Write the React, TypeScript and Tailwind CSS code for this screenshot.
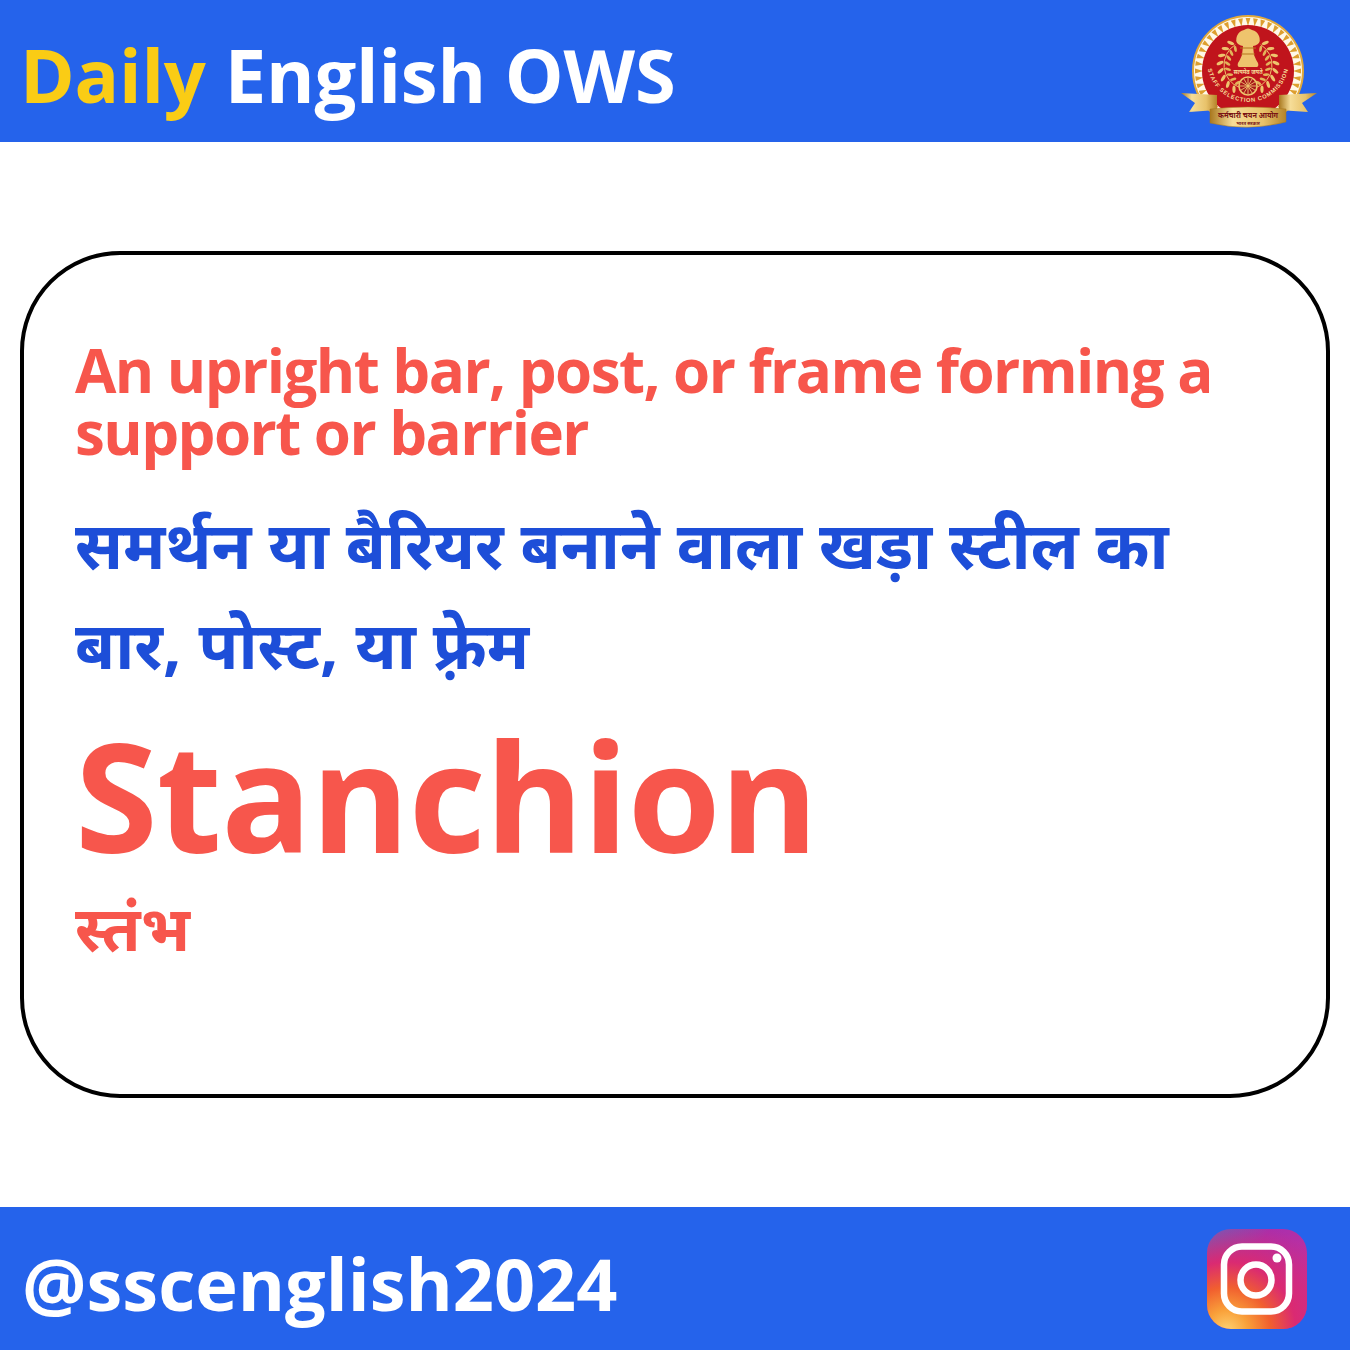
const font = { fontFamily: '"Open Sans", "Noto Sans", "Noto Sans Devanagari", sans-serif' };

const polar = (r: number, deg: number, cx = 67, cy = 54) => ({
  x: cx + r * Math.cos((deg * Math.PI) / 180),
  y: cy + r * Math.sin((deg * Math.PI) / 180),
});

// one laurel branch, mirrored for the right side
const Laurel = ({ side }: { side: 1 | -1 }) => {
  const steps = Array.from({ length: 8 }, (_, i) => 232 - i * 16);
  const from = polar(24, 238);
  const to = polar(24, 110);
  return (
    <g transform={side === -1 ? 'translate(134 0) scale(-1 1)' : undefined}>
      <path d={`M${from.x} ${from.y} A24 24 0 0 0 ${to.x} ${to.y}`} fill="none" stroke="#eec46d" strokeWidth="1" />
      {steps.map((a) => {
        const o = polar(28, a);
        const n = polar(20.5, a);
        return (
          <g key={a}>
            <ellipse cx={o.x} cy={o.y} rx="1.6" ry="3.7" fill="#eec46d" transform={`rotate(${a + 60} ${o.x} ${o.y})`} />
            <ellipse cx={n.x} cy={n.y} rx="1.4" ry="3.2" fill="#e3b45a" transform={`rotate(${a + 120} ${n.x} ${n.y})`} />
          </g>
        );
      })}
    </g>
  );
};

const SscLogo = () => {
  const teeth = Array.from({ length: 44 }, (_, i) => i * (360 / 44));
  const spokes = Array.from({ length: 12 }, (_, i) => i * 30);
  return (
    <svg width="136" height="118" viewBox="0 0 136 118" className="block">
      <defs>
        <linearGradient id="gold" x1="0" y1="0" x2="1" y2="0">
          <stop offset="0" stopColor="#a9781f" />
          <stop offset="0.3" stopColor="#f6dd98" />
          <stop offset="0.7" stopColor="#e8c26a" />
          <stop offset="1" stopColor="#b5842a" />
        </linearGradient>
        <path id="sscArc" d="M 26 50 A 41 41 0 0 0 108 50" fill="none" />
      </defs>
      <circle cx="67" cy="60" r="56" fill="#e2a93b" />
      <circle cx="67" cy="60" r="54" fill="#fff8e8" />
      {teeth.map((a) => (
        <polygon key={a} points="64.6,7 69.4,7 67,15" fill="#dd9f2f" transform={`rotate(${a} 67 60)`} />
      ))}
      <circle cx="67" cy="60" r="46" fill="#c0141c" />
      <Laurel side={1} />
      <Laurel side={-1} />
      <path
        d="M63 19 q4 -3 8 0 q5 1 7 6 q2 5 -1 8 q-3 2 -5 2 l1 9 q2 5 4 8 q1 3 -1 4 h-18 q-2 -1 -1 -4 q2 -3 4 -8 l1 -9 q-2 0 -5 -2 q-3 -3 -1 -8 q2 -5 7 -6 z"
        fill="#eec46d"
      />
      <path d="M59 37 h16 M60 43 h14" stroke="#b5741e" strokeWidth="1" />
      <text x="67" y="63" textAnchor="middle" fontSize="5.6" fill="#f6dd98" fontWeight="700">सत्यमेव जयते</text>
      <circle cx="67" cy="75" r="9" fill="#a8161a" stroke="#eec46d" strokeWidth="1.6" />
      {spokes.map((a) => {
        const p = polar(8, a, 67, 75);
        return <line key={a} x1="67" y1="75" x2={p.x} y2={p.y} stroke="#eec46d" strokeWidth="0.9" />;
      })}
      <text fontSize="5.8" fontWeight="700" fill="#f6dd98" letterSpacing="0.75" style={{ fontFamily: '"Liberation Sans", sans-serif' }}>
        <textPath href="#sscArc" startOffset="50%" textAnchor="middle">STAFF SELECTION COMMISSION</textPath>
      </text>
      <path d="M0 82 L36 84 L36 99 L8 101 L14 92 Z" fill="url(#gold)" />
      <path d="M136 82 L98 84 L98 99 L127 101 L121 92 Z" fill="url(#gold)" />
      <path d="M29 98 Q67 94 105 98 L105 111 Q67 121 29 112 Z" fill="url(#gold)" stroke="#a9781f" strokeWidth="0.5" />
      <text x="67" y="107" textAnchor="middle" fontSize="7.2" fontWeight="700" fill="#7a1414">कर्मचारी चयन आयोग</text>
      <text x="67" y="114" textAnchor="middle" fontSize="4.6" fontWeight="700" fill="#7a1414">भारत सरकार</text>
    </svg>
  );
};

const InstagramLogo = () => (
  <svg width="100" height="100" viewBox="0 0 100 100" className="block">
    <defs>
      <radialGradient id="igA" cx="0.2" cy="1.02" r="1.15">
        <stop offset="0" stopColor="#fed373" />
        <stop offset="0.18" stopColor="#f9a13a" />
        <stop offset="0.38" stopColor="#f15f2f" />
        <stop offset="0.6" stopColor="#da2a72" />
        <stop offset="1" stopColor="#da2a72" stopOpacity="0" />
      </radialGradient>
      <linearGradient id="igB" x1="0.05" y1="0" x2="0.95" y2="0.6">
        <stop offset="0" stopColor="#4f6bd0" />
        <stop offset="0.45" stopColor="#a62fb0" />
        <stop offset="1" stopColor="#c52f9a" />
      </linearGradient>
    </defs>
    <rect width="100" height="100" rx="24" fill="url(#igB)" />
    <rect width="100" height="100" rx="24" fill="url(#igA)" />
    <rect x="17" y="17.5" width="65" height="65" rx="18" fill="none" stroke="#fff" strokeWidth="6.5" />
    <circle cx="49" cy="51" r="15.5" fill="none" stroke="#fff" strokeWidth="6.5" />
    <circle cx="70" cy="29" r="4.5" fill="#fff" />
  </svg>
);

export default function App() {
  return (
    <div className="flex h-[1350px] w-[1350px] flex-col bg-white font-bold" style={font}>
      <header className="flex h-[142px] items-center justify-between bg-[#2563eb] pb-[2px] pl-[20px] pr-[33px]">
        <h1 className="pt-[10px] text-[74px] leading-none tracking-[-0.2px] text-white">
          <span className="text-[#facc15]">Daily</span> English OWS
        </h1>
        <SscLogo />
      </header>

      <main className="flex flex-1 items-center px-5">
        <div className="flex h-[847px] w-full flex-col rounded-[100px] border-4 border-black px-[51px] pt-[84px]">
          <p className="text-[60px] leading-[62px] tracking-[-1.55px] text-[#f7564c]">
            An upright bar, post, or frame forming a support or barrier
          </p>
          <p className="mt-[31px] text-[65px] leading-[100px] text-[#1d4ed8]">
            समर्थन या बैरियर बनाने वाला खड़ा स्टील का बार, पोस्ट, या फ़्रेम
          </p>
          <p className="mt-[16px] text-[150px] leading-[170px] tracking-[-0.8px] text-[#f7564c]">Stanchion</p>
          <p className="mt-[12px] text-[63px] leading-[70px] text-[#f7564c]">स्तंभ</p>
        </div>
      </main>

      <footer className="flex h-[143px] items-center justify-between bg-[#2563eb] pl-[22px] pr-[43px]">
        <span className="pt-[8px] text-[72px] leading-none text-white">@sscenglish2024</span>
        <InstagramLogo />
      </footer>
    </div>
  );
}
